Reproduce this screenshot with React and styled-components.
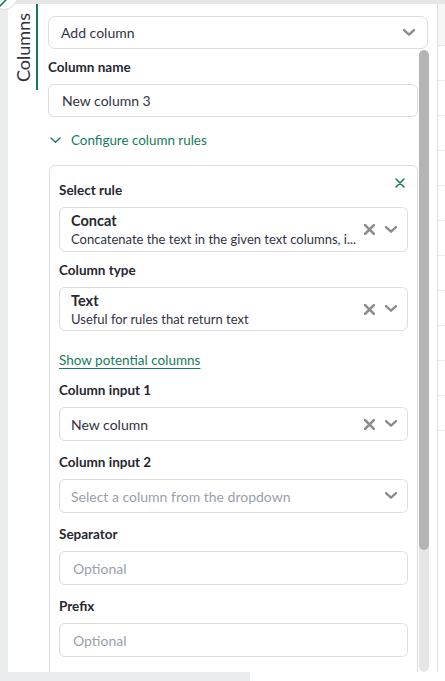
import React from "react";
import styled, { createGlobalStyle } from "styled-components";

const GREEN = "#167a5c";

const GlobalStyle = createGlobalStyle`
  html, body {
    margin: 0;
    padding: 0;
    background: #ffffff;
  }
  body {
    font-family: Lato, "Liberation Sans", sans-serif;
    color: #31333f;
  }
  * { box-sizing: border-box; }
`;

const Chevron = ({ color = "#8c8c8c", width = 12, stroke = 2.4 }) => (
  <svg width={width} height={width * 0.6} viewBox="0 0 12 7" fill="none">
    <path
      d="M1 1l5 4.6L11 1"
      stroke={color}
      strokeWidth={stroke}
      strokeLinecap="round"
      strokeLinejoin="round"
    />
  </svg>
);

const Cross = ({ color = "#8c8c8c", size = 11, stroke = 2.4 }) => (
  <svg width={size} height={size} viewBox="0 0 10 10" fill="none">
    <path
      d="M1 1l8 8M9 1L1 9"
      stroke={color}
      strokeWidth={stroke}
      strokeLinecap="round"
    />
  </svg>
);

const App = () => {
  const rows = Array.from({ length: 11 });

  return (
    <>
      <GlobalStyle />
      <Page>
        <CollapseButton>
          <svg width="28" height="28" viewBox="0 0 28 28" fill="none">
            <path d="M10 24l6-6" stroke={GREEN} strokeWidth="1.6" strokeLinecap="round" />
          </svg>
        </CollapseButton>
        <TopBand />
        <Body>
          <LeftRail />
          <TabColumn>
            <Tab>
              <TabLabel>Columns</TabLabel>
            </Tab>
          </TabColumn>
          <Panel>
            <AddSelect>
              <span>Add column</span>
              <Chevron />
            </AddSelect>
            <ScrollRow>
              <Content>
                <Label>Column name</Label>
                <TextBox>New column 3</TextBox>

                <Toggle>
                  <Chevron color={GREEN} width={11} stroke={1.5} />
                  <span>Configure column rules</span>
                </Toggle>

                <RuleCard>
                  <CloseButton>
                    <Cross color={GREEN} size={10} stroke={1.5} />
                  </CloseButton>

                  <Field $space={8}>
                    <Label>Select rule</Label>
                    <SelectBox $height={45}>
                      <SelectText>
                        <OptionTitle>Concat</OptionTitle>
                        <OptionHint>
                          Concatenate the text in the given text columns, i...
                        </OptionHint>
                      </SelectText>
                      <SelectIcons>
                        <Cross />
                        <Chevron />
                      </SelectIcons>
                    </SelectBox>
                  </Field>

                  <Field $space={19}>
                    <Label>Column type</Label>
                    <SelectBox $height={44}>
                      <SelectText>
                        <OptionTitle>Text</OptionTitle>
                        <OptionHint>Useful for rules that return text</OptionHint>
                      </SelectText>
                      <SelectIcons>
                        <Cross />
                        <Chevron />
                      </SelectIcons>
                    </SelectBox>
                  </Field>

                  <LinkButton>Show potential columns</LinkButton>

                  <Field>
                    <Label>Column input 1</Label>
                    <SelectBox>
                      <SelectValue>New column</SelectValue>
                      <SelectIcons>
                        <Cross />
                        <Chevron />
                      </SelectIcons>
                    </SelectBox>
                  </Field>

                  <Field>
                    <Label>Column input 2</Label>
                    <SelectBox>
                      <SelectValue $placeholder>
                        Select a column from the dropdown
                      </SelectValue>
                      <SelectIcons>
                        <Chevron />
                      </SelectIcons>
                    </SelectBox>
                  </Field>

                  <Field>
                    <Label>Separator</Label>
                    <InputBox $placeholder>Optional</InputBox>
                  </Field>

                  <Field>
                    <Label>Prefix</Label>
                    <InputBox $placeholder>Optional</InputBox>
                  </Field>
                </RuleCard>
              </Content>
              <Scrollbar>
                <Thumb />
              </Scrollbar>
            </ScrollRow>
          </Panel>
          <TableEdge>
            <TableHead />
            {rows.map((_, i) => (
              <TableRow key={i} />
            ))}
          </TableEdge>
        </Body>
        <PageScroll>
          <PageThumb />
        </PageScroll>
      </Page>
    </>
  );
};

const Page = styled.div`
  position: relative;
  width: 445px;
  height: 681px;
  overflow: hidden;
  display: flex;
  flex-direction: column;
  background: #ffffff;
`;

const CollapseButton = styled.div`
  position: absolute;
  left: -10px;
  top: -18px;
  width: 28px;
  height: 28px;
  border-radius: 50%;
  border: 1px solid #dcdcdc;
  background: #ffffff;
  z-index: 2;
  svg {
    display: block;
    margin: -1px;
  }
`;

const TopBand = styled.div`
  flex: none;
  height: 4px;
  background: #e6e6e6;
`;

const Body = styled.div`
  flex: 1;
  min-height: 0;
  display: flex;
`;

const LeftRail = styled.div`
  flex: none;
  width: 8px;
  background: #ebecee;
`;

const TabColumn = styled.div`
  flex: none;
  width: 30px;
  padding-left: 2px;
`;

const Tab = styled.div`
  width: 28px;
  height: 86px;
  display: flex;
  align-items: center;
  justify-content: center;
  border-right: 2px solid ${GREEN};
`;

const TabLabel = styled.span`
  writing-mode: vertical-rl;
  transform: rotate(180deg);
  font-size: 18px;
  color: #31333f;
`;

const Panel = styled.div`
  flex: 1;
  min-width: 0;
  display: flex;
  flex-direction: column;
  padding: 12px 0 0 10px;
`;

const AddSelect = styled.div`
  flex: none;
  width: 380px;
  height: 33px;
  display: flex;
  align-items: center;
  justify-content: space-between;
  padding: 0 12px 0 12px;
  border: 1px solid #dcdcdc;
  border-radius: 7px;
  font-size: 14px;
  color: #31333f;
`;

const ScrollRow = styled.div`
  flex: 1;
  min-height: 0;
  display: flex;
  margin-top: 1px;
`;

const Content = styled.div`
  flex: none;
  width: 370px;
  overflow: hidden;
  padding-top: 7px;
`;

const Scrollbar = styled.div`
  flex: none;
  width: 10px;
  margin-left: 1px;
  border-radius: 5px;
  background: #e6e6e6;
  overflow: hidden;
`;

const Thumb = styled.div`
  height: 500px;
  border-radius: 5px;
  background: #b4b4b4;
`;

const Label = styled.div`
  font-size: 13.5px;
  font-weight: 700;
  line-height: 20px;
  color: #262730;
  margin-bottom: 7px;
`;

const TextBox = styled.div`
  height: 33px;
  display: flex;
  align-items: center;
  padding: 0 13px;
  border: 1px solid #dcdcdc;
  border-radius: 6px;
  font-size: 14px;
  color: #31333f;
`;

const Toggle = styled.div`
  display: flex;
  align-items: center;
  gap: 10px;
  margin: 13px 0 15px 2px;
  line-height: 20px;
  font-size: 13.4px;
  color: ${GREEN};
`;

const RuleCard = styled.div`
  position: relative;
  margin-left: 1px;
  padding: 14px 9px 40px 9px;
  border: 1px solid #dcdcdc;
  border-radius: 6px;
  display: flex;
  flex-direction: column;
`;

const CloseButton = styled.div`
  position: absolute;
  top: 12px;
  right: 12px;
  svg {
    display: block;
  }
`;

const Field = styled.div`
  display: flex;
  flex-direction: column;
  margin-bottom: ${(p) => p.$space ?? 11}px;
`;

const SelectBox = styled.div`
  height: ${(p) => p.$height ?? 34}px;
  display: flex;
  align-items: center;
  justify-content: space-between;
  padding: 0 10px 0 11px;
  border: 1px solid #dcdcdc;
  border-radius: 6px;
`;

const SelectText = styled.div`
  display: flex;
  flex-direction: column;
  min-width: 0;
`;

const OptionTitle = styled.div`
  font-size: 14.5px;
  font-weight: 700;
  line-height: 19px;
  color: #262730;
`;

const OptionHint = styled.div`
  font-size: 13px;
  line-height: 18px;
  color: #31333f;
  white-space: nowrap;
`;

const SelectValue = styled.div`
  font-size: 14px;
  color: ${(p) => (p.$placeholder ? "#9aa0ab" : "#31333f")};
  white-space: nowrap;
`;

const SelectIcons = styled.div`
  display: flex;
  align-items: center;
  gap: 10px;
  svg {
    display: block;
  }
`;

const InputBox = styled.div`
  height: 34px;
  display: flex;
  align-items: center;
  padding: 0 13px;
  border: 1px solid #dcdcdc;
  border-radius: 6px;
  font-size: 14px;
  color: ${(p) => (p.$placeholder ? "#9aa0ab" : "#31333f")};
`;

const LinkButton = styled.div`
  margin-bottom: 10px;
  line-height: 20px;
  font-size: 13.5px;
  color: ${GREEN};
  text-decoration: underline;
  text-underline-offset: 3px;
`;

const TableEdge = styled.div`
  flex: none;
  width: 8px;
  margin-left: 9px;
  border-left: 1px solid #e0e0e0;
  display: flex;
  flex-direction: column;
`;

const TableHead = styled.div`
  height: 42px;
  background: #f6f6f6;
  border-bottom: 1px solid #e6e6e6;
`;

const TableRow = styled.div`
  height: 35px;
  border-bottom: 1px solid #ececec;
`;

const PageScroll = styled.div`
  flex: none;
  height: 9px;
  display: flex;
`;

const PageThumb = styled.div`
  width: 250px;
  background: #ebecee;
`;

export default App;
